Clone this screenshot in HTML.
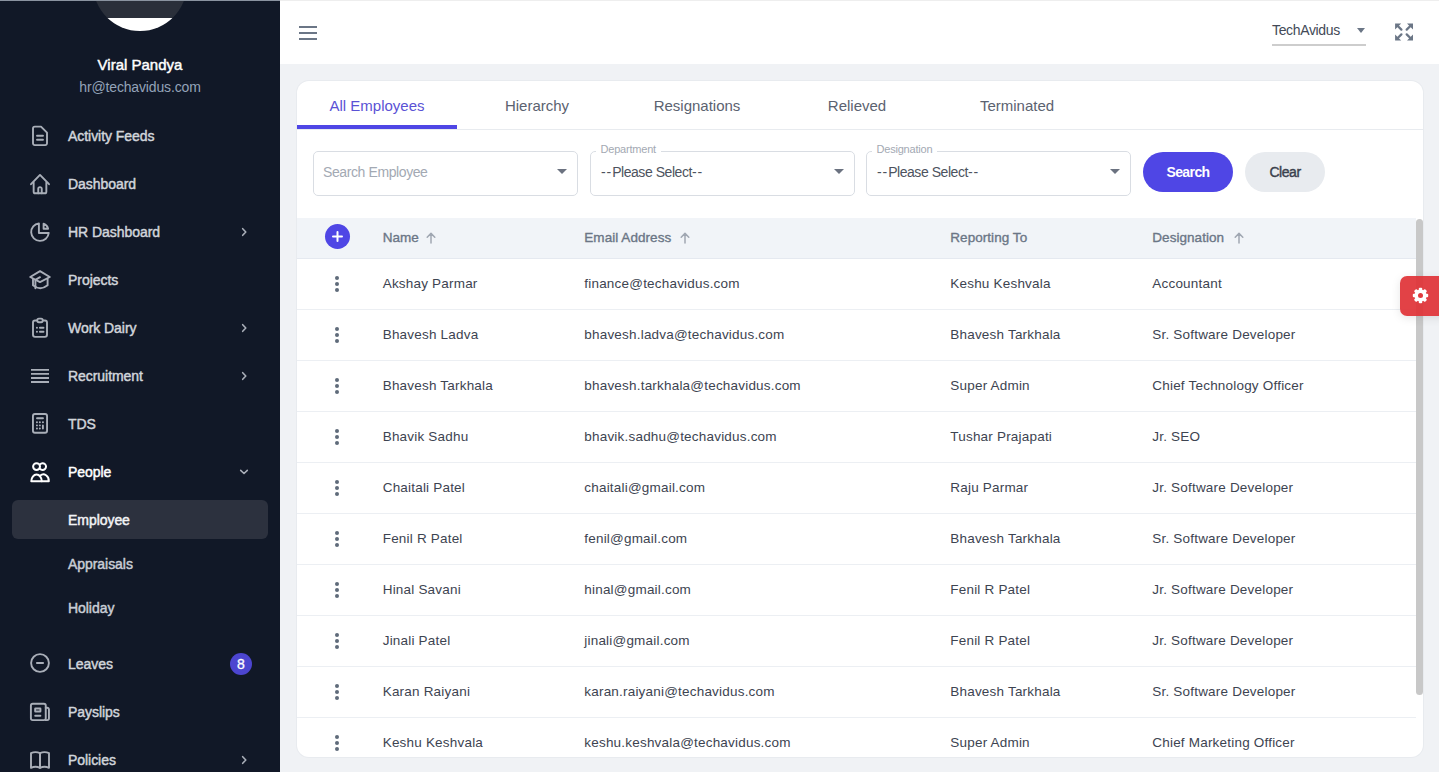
<!DOCTYPE html>
<html><head><meta charset="utf-8">
<style>
*{box-sizing:border-box;margin:0;padding:0}
html,body{width:1439px;height:772px;overflow:hidden;background:#f0f2f5;font-family:"Liberation Sans",sans-serif}
.abs{position:absolute}
#sb{position:absolute;left:0;top:0;width:280px;height:772px;background:#111827;overflow:hidden}
#topline{position:absolute;left:0;top:0;width:1439px;height:1px;background:#eeeeee;z-index:5}
#topline2{position:absolute;left:0;top:0;width:280px;height:1px;background:#8a93a0;z-index:6}
.av{position:absolute;left:93px;top:-63px;width:94px;height:94px;border-radius:50%;overflow:hidden;background:#2a2f3a}
.av .dk{position:absolute;left:0;top:80.5px;width:100%;height:20px;background:#fff}
.uname{position:absolute;left:0;width:280px;top:56px;text-align:center;color:#fff;font-size:15px;font-weight:normal;line-height:18px;letter-spacing:0px;-webkit-text-stroke:0.45px currentColor}
.umail{position:absolute;left:0;width:280px;top:78px;text-align:center;color:#94a3b8;font-size:14px;line-height:18px;letter-spacing:-0.15px}
.it{position:absolute;left:68px;color:#d1d5db;font-size:14px;font-weight:normal;line-height:18px;white-space:nowrap;letter-spacing:-0.05px;-webkit-text-stroke:0.45px currentColor}
.ic{position:absolute;left:28px;width:24px;height:24px}
.chev{position:absolute;left:239px;width:10px;height:10px}
.sel{position:absolute;left:12px;top:500px;width:256px;height:39px;background:#2c313e;border-radius:6px}
.badge{position:absolute;left:230px;top:652.5px;width:22px;height:22px;border-radius:50%;background:#4c45d0;color:#fff;font-size:14px;font-weight:normal;-webkit-text-stroke:0.3px #fff;text-align:center;line-height:22px}

#hd{position:absolute;left:280px;top:1px;width:1159px;height:63px;background:#fff}
.ham{position:absolute;left:299px;width:18px;height:2px;background:#6b7686}

#card{position:absolute;left:297px;top:81px;width:1126px;height:675.5px;background:#fff;border-radius:12px;box-shadow:0 0 0 1px #e8ebef;overflow:hidden}
.tab{position:absolute;top:0;width:160px;height:48px;text-align:center;font-size:15px;line-height:50px;color:#5b6270}
.tab.on{color:#5a52d5}
.tabul{position:absolute;left:0;top:44px;width:160px;height:4px;background:#4f46e5}
.tabbd{position:absolute;left:0;top:48px;width:1126px;height:1px;background:#e8ebef}

.inp{position:absolute;top:69.5px;width:264.5px;height:45px;border:1px solid #d9dde3;border-radius:5px}
.inp .tx{position:absolute;left:10px;top:11.5px;font-size:14px;line-height:18px;color:#4d535e;white-space:nowrap;letter-spacing:-0.45px}
.inp .dd{letter-spacing:0.9px}
.inp .tx.ph{left:9px;top:11.5px;letter-spacing:-0.4px}
.inp .ph{color:#a3a9b3}
.inp .tri{position:absolute;right:10px;top:17.5px;width:0;height:0;border-left:5px solid transparent;border-right:5px solid transparent;border-top:5px solid #6b7280}
.inp .lbl{position:absolute;left:4.5px;top:-9.5px;padding:0 5px;background:#fff;font-size:11px;line-height:14px;color:#a3a9b3;letter-spacing:-0.2px}
.btn{position:absolute;top:71px;height:40px;border-radius:20px;text-align:center;line-height:40px;font-size:14px;font-weight:bold;letter-spacing:-0.6px}

.thd{position:absolute;left:0;top:137px;width:1119px;height:41px;background:#f1f4f8;border-bottom:1px solid #e5e9f0}
.th{position:absolute;top:11px;font-size:13.5px;line-height:18px;color:#6b7686;font-weight:normal;white-space:nowrap;letter-spacing:0.05px;-webkit-text-stroke:0.35px currentColor}
.row{position:absolute;left:0;width:1119px;height:51px;border-bottom:1px solid #eceff3}
.td{position:absolute;top:16px;font-size:13.5px;line-height:18px;color:#3d4451;white-space:nowrap;letter-spacing:0.2px}
.keb{position:absolute;left:38px;top:17px;width:4px;height:16px}
.keb i{position:absolute;left:0;width:4px;height:4px;border-radius:50%;background:#5f6b7a}
.plus{position:absolute;left:28px;top:6px;width:25px;height:25px;border-radius:50%;background:#4f46e5}
.plus svg{display:block}
.arr{position:absolute;top:151px}
.sth{position:absolute;left:1119px;top:137.5px;width:7px;height:476px;background:#c8c8c8;border-radius:4px 4px 4px 4px}

#gear{position:absolute;left:1400px;top:275.5px;width:45px;height:40px;background:rgba(224,52,56,0.93);border-radius:7px 0 0 7px;box-shadow:0 2px 10px rgba(0,0,0,.10)}
.tav{position:absolute;left:1272px;top:21px;font-size:14px;line-height:18px;color:#434a57;letter-spacing:-0.35px}
.tavtri{position:absolute;left:1356.5px;top:27.5px;width:0;height:0;border-left:4.5px solid transparent;border-right:4.5px solid transparent;border-top:5px solid #6b7686}
.tavul{position:absolute;left:1272px;top:43.5px;width:94px;height:2px;background:#cdcdcd}
.fs{position:absolute;left:1394px;top:22px}
</style></head>
<body>
<div id="topline"></div>
<aside id="sb">
  <div class="av"><div class="dk"></div></div>
  <div class="uname">Viral Pandya</div>
  <div class="umail">hr@techavidus.com</div>
<svg class="ic" style="top:123.7px;color:#a9aeb8" width="24" height="24" viewBox="0 0 24 24" fill="none" stroke="currentColor" stroke-width="1.9" stroke-linecap="round" stroke-linejoin="round"><path d="M5 4.45a1.8 1.8 0 0 1 1.8-1.8h6.2l6 6v10.65a1.8 1.8 0 0 1-1.8 1.8H6.8A1.8 1.8 0 0 1 5 19.3z"/><path d="M9 11.7h6M9 15.7h6"/></svg>
<div class="it" style="top:126.9px">Activity Feeds</div>
<svg class="ic" style="top:171.5px;color:#a9aeb8" width="24" height="24" viewBox="0 0 24 24" fill="none" stroke="currentColor" stroke-width="1.9" stroke-linecap="round" stroke-linejoin="round"><path d="M3 12.2L12 2.9l9 9.3"/><path d="M5.65 10.4v9.3a1.6 1.6 0 0 0 1.6 1.6h9.5a1.6 1.6 0 0 0 1.6-1.6v-9.3"/><path d="M10.25 21.3v-4.45a1.75 1.75 0 0 1 3.5 0v4.45"/></svg>
<div class="it" style="top:174.9px">Dashboard</div>
<svg class="ic" style="top:219.5px;color:#a9aeb8" width="24" height="24" viewBox="0 0 24 24" fill="none" stroke="currentColor" stroke-width="1.9" stroke-linecap="round" stroke-linejoin="round"><path d="M10.9 3.37A8.8 8.8 0 1 0 20.75 13H10.9z"/><path d="M15.6 3.6A7 7 0 0 1 20.1 8.7H15.6z"/></svg>
<div class="it" style="top:222.9px">HR Dashboard</div>
<svg class="chev" style="top:226.5px" width="10" height="10" viewBox="0 0 10 10" fill="none" stroke="#a9aeb8" stroke-width="1.6" stroke-linecap="round" stroke-linejoin="round"><path d="M3.7 1.7L6.8 5 3.7 8.3"/></svg>
<svg class="ic" style="top:267.5px;color:#a9aeb8" width="24" height="24" viewBox="0 0 24 24" fill="none" stroke="currentColor" stroke-width="1.9" stroke-linecap="round" stroke-linejoin="round"><path d="M12 3.1L21.8 9 12 14.1 2.2 9z"/><path d="M5 11.3v5.9q7.2 6 14.6 0v-6.2"/><path d="M12 9.2L7.4 11.8v8.4"/></svg>
<div class="it" style="top:270.9px">Projects</div>
<svg class="ic" style="top:315.8px;color:#a9aeb8" width="24" height="24" viewBox="0 0 24 24" fill="none" stroke="currentColor" stroke-width="1.9" stroke-linecap="round" stroke-linejoin="round"><path d="M9.2 4.45H7a2 2 0 0 0-2 2v12.4a2 2 0 0 0 2 2h10a2 2 0 0 0 2-2V6.45a2 2 0 0 0-2-2h-2.2"/><rect x="9.25" y="2.6" width="5.5" height="3.6" rx="1.6"/><path d="M8.9 11.8h.1M8.9 15.8h.1M11.9 11.8h3.6M11.9 15.8h3.6"/></svg>
<div class="it" style="top:318.9px">Work Dairy</div>
<svg class="chev" style="top:322.8px" width="10" height="10" viewBox="0 0 10 10" fill="none" stroke="#a9aeb8" stroke-width="1.6" stroke-linecap="round" stroke-linejoin="round"><path d="M3.7 1.7L6.8 5 3.7 8.3"/></svg>
<svg class="ic" style="top:363.5px;color:#a9aeb8" width="24" height="24" viewBox="0 0 24 24" fill="none" stroke="currentColor" stroke-width="1.9" stroke-linecap="round" stroke-linejoin="round"><path stroke-linecap="butt" d="M3 5.9h18M3 9.9h18M3 14h18M3 18h18"/></svg>
<div class="it" style="top:366.9px">Recruitment</div>
<svg class="chev" style="top:370.5px" width="10" height="10" viewBox="0 0 10 10" fill="none" stroke="#a9aeb8" stroke-width="1.6" stroke-linecap="round" stroke-linejoin="round"><path d="M3.7 1.7L6.8 5 3.7 8.3"/></svg>
<svg class="ic" style="top:411.3px;color:#a9aeb8" width="24" height="24" viewBox="0 0 24 24" fill="none" stroke="currentColor" stroke-width="1.9" stroke-linecap="round" stroke-linejoin="round"><rect x="4.95" y="3.05" width="14.1" height="18.7" rx="2"/><path d="M9 7.2h6"/><path d="M8.9 11.3h.1M11.8 11.3h.1M14.9 11.3h.1M8.9 14.4h.1M11.8 14.4h.1M14.9 14.4v3.1M8.9 17.5h.1M11.8 17.5h.1"/></svg>
<div class="it" style="top:414.9px">TDS</div>
<svg class="ic" style="top:459.5px;color:#ffffff" width="24" height="24" viewBox="0 0 24 24" fill="none" stroke="currentColor" stroke-width="2.0" stroke-linecap="round" stroke-linejoin="round"><circle cx="8.55" cy="6.6" r="3.45"/><path d="M12 4.3A3.45 3.45 0 1 1 12 8.9"/><path d="M3.3 21.2A5.25 6.6 0 0 1 13.8 21.2z"/><path d="M12.3 15.6A5.4 6.4 0 0 1 20.8 21.2H13.8"/></svg>
<div class="it" style="top:462.9px;color:#fff">People</div>
<svg class="chev" style="top:466.5px" width="10" height="10" viewBox="0 0 10 10" fill="none" stroke="#a9aeb8" stroke-width="1.6" stroke-linecap="round" stroke-linejoin="round"><path d="M1.7 3.4L5 6.5 8.3 3.4"/></svg>
<svg class="ic" style="top:651.1px;color:#a9aeb8" width="24" height="24" viewBox="0 0 24 24" fill="none" stroke="currentColor" stroke-width="1.9" stroke-linecap="round" stroke-linejoin="round"><circle cx="12" cy="12" r="8.9"/><path d="M8.9 12h6.2"/></svg>
<div class="it" style="top:655.0px">Leaves</div>
<svg class="ic" style="top:699.5px;color:#a9aeb8" width="24" height="24" viewBox="0 0 24 24" fill="none" stroke="currentColor" stroke-width="1.9" stroke-linecap="round" stroke-linejoin="round"><rect x="2.9" y="3.75" width="14.85" height="16.4" rx="1.8"/><path d="M17.75 7.7h1.4a1.8 1.8 0 0 1 1.8 1.8v8.85a1.8 1.8 0 0 1-1.8 1.8h-1.4"/><rect x="7.15" y="8.5" width="5.3" height="3" rx=".3"/><path d="M7.2 15.8h5.2"/></svg>
<div class="it" style="top:703.3px">Payslips</div>
<svg class="ic" style="top:747.8px;color:#a9aeb8" width="24" height="24" viewBox="0 0 24 24" fill="none" stroke="currentColor" stroke-width="1.9" stroke-linecap="round" stroke-linejoin="round"><path d="M3 5.2c3-1.4 6-1.4 9 0v14.6c-3-1.4-6-1.4-9 0z"/><path d="M12 5.2c3-1.4 6-1.4 9 0v14.6c-3-1.4-6-1.4-9 0z"/></svg>
<div class="it" style="top:751.0px">Policies</div>
<svg class="chev" style="top:754.8px" width="10" height="10" viewBox="0 0 10 10" fill="none" stroke="#a9aeb8" stroke-width="1.6" stroke-linecap="round" stroke-linejoin="round"><path d="M3.7 1.7L6.8 5 3.7 8.3"/></svg>
<div class="sel"></div>
<div class="it" style="top:510.6px;color:#f3f4f6">Employee</div>
<div class="it" style="top:554.6px;color:#c9ced6">Appraisals</div>
<div class="it" style="top:598.6px;color:#c9ced6">Holiday</div>
<div class="badge">8</div>
</aside>
<div id="topline2"></div>
<header id="hd"></header>
<div class="ham" style="top:25.5px"></div>
<div class="ham" style="top:31.5px"></div>
<div class="ham" style="top:37.5px"></div>

<div id="card">
  <div class="tab on" style="left:0">All Employees</div>
  <div class="tab" style="left:160px">Hierarchy</div>
  <div class="tab" style="left:320px">Resignations</div>
  <div class="tab" style="left:480px">Relieved</div>
  <div class="tab" style="left:640px">Terminated</div>
  <div class="tabul"></div>
  <div class="tabbd"></div>

  <div class="inp" style="left:16px"><div class="tx ph">Search Employee</div><div class="tri"></div></div>
  <div class="inp" style="left:293px"><div class="lbl">Department</div><div class="tx"><span class="dd">--</span>Please Select<span class="dd">--</span></div><div class="tri"></div></div>
  <div class="inp" style="left:569px"><div class="lbl">Designation</div><div class="tx"><span class="dd">--</span>Please Select<span class="dd">--</span></div><div class="tri"></div></div>
  <div class="btn" style="left:846px;width:90px;background:#4f46e5;color:#fff">Search</div>
  <div class="btn" style="left:948px;width:80px;background:#e8ebef;color:#3a414d;font-weight:normal;letter-spacing:-0.45px;-webkit-text-stroke:0.4px currentColor">Clear</div>

  <div class="thd">
<div class="plus"><svg width="25" height="25" viewBox="0 0 25 25" stroke="#fff" stroke-width="2" stroke-linecap="round"><path d="M12.5 8v9M8 12.5h9"/></svg></div>
<div class="th" style="left:85.7px">Name</div>
<div class="th" style="left:287.3px">Email Address</div>
<div class="th" style="left:653.3px">Reporting To</div>
<div class="th" style="left:855.3px">Designation</div>
</div>
<svg class="arr" style="left:127.8px" width="12" height="12" viewBox="0 0 12 12" fill="none" stroke="#a0a7b2" stroke-width="1.5" stroke-linecap="round" stroke-linejoin="round"><path d="M6 11V1.4M2.2 5.2L6 1.4l3.8 3.8"/></svg>
<svg class="arr" style="left:382.0px" width="12" height="12" viewBox="0 0 12 12" fill="none" stroke="#a0a7b2" stroke-width="1.5" stroke-linecap="round" stroke-linejoin="round"><path d="M6 11V1.4M2.2 5.2L6 1.4l3.8 3.8"/></svg>
<svg class="arr" style="left:936.0px" width="12" height="12" viewBox="0 0 12 12" fill="none" stroke="#a0a7b2" stroke-width="1.5" stroke-linecap="round" stroke-linejoin="round"><path d="M6 11V1.4M2.2 5.2L6 1.4l3.8 3.8"/></svg>
<div class="row" style="top:178.3px"><div class="keb"><i style="top:0"></i><i style="top:6px"></i><i style="top:12px"></i></div>
<div class="td" style="left:85.7px">Akshay Parmar</div>
<div class="td" style="left:287.3px">finance@techavidus.com</div>
<div class="td" style="left:653.3px">Keshu Keshvala</div>
<div class="td" style="left:855.3px">Accountant</div>
</div>
<div class="row" style="top:229.3px"><div class="keb"><i style="top:0"></i><i style="top:6px"></i><i style="top:12px"></i></div>
<div class="td" style="left:85.7px">Bhavesh Ladva</div>
<div class="td" style="left:287.3px">bhavesh.ladva@techavidus.com</div>
<div class="td" style="left:653.3px">Bhavesh Tarkhala</div>
<div class="td" style="left:855.3px">Sr. Software Developer</div>
</div>
<div class="row" style="top:280.3px"><div class="keb"><i style="top:0"></i><i style="top:6px"></i><i style="top:12px"></i></div>
<div class="td" style="left:85.7px">Bhavesh Tarkhala</div>
<div class="td" style="left:287.3px">bhavesh.tarkhala@techavidus.com</div>
<div class="td" style="left:653.3px">Super Admin</div>
<div class="td" style="left:855.3px">Chief Technology Officer</div>
</div>
<div class="row" style="top:331.3px"><div class="keb"><i style="top:0"></i><i style="top:6px"></i><i style="top:12px"></i></div>
<div class="td" style="left:85.7px">Bhavik Sadhu</div>
<div class="td" style="left:287.3px">bhavik.sadhu@techavidus.com</div>
<div class="td" style="left:653.3px">Tushar Prajapati</div>
<div class="td" style="left:855.3px">Jr. SEO</div>
</div>
<div class="row" style="top:382.3px"><div class="keb"><i style="top:0"></i><i style="top:6px"></i><i style="top:12px"></i></div>
<div class="td" style="left:85.7px">Chaitali Patel</div>
<div class="td" style="left:287.3px">chaitali@gmail.com</div>
<div class="td" style="left:653.3px">Raju Parmar</div>
<div class="td" style="left:855.3px">Jr. Software Developer</div>
</div>
<div class="row" style="top:433.3px"><div class="keb"><i style="top:0"></i><i style="top:6px"></i><i style="top:12px"></i></div>
<div class="td" style="left:85.7px">Fenil R Patel</div>
<div class="td" style="left:287.3px">fenil@gmail.com</div>
<div class="td" style="left:653.3px">Bhavesh Tarkhala</div>
<div class="td" style="left:855.3px">Sr. Software Developer</div>
</div>
<div class="row" style="top:484.3px"><div class="keb"><i style="top:0"></i><i style="top:6px"></i><i style="top:12px"></i></div>
<div class="td" style="left:85.7px">Hinal Savani</div>
<div class="td" style="left:287.3px">hinal@gmail.com</div>
<div class="td" style="left:653.3px">Fenil R Patel</div>
<div class="td" style="left:855.3px">Jr. Software Developer</div>
</div>
<div class="row" style="top:535.3px"><div class="keb"><i style="top:0"></i><i style="top:6px"></i><i style="top:12px"></i></div>
<div class="td" style="left:85.7px">Jinali Patel</div>
<div class="td" style="left:287.3px">jinali@gmail.com</div>
<div class="td" style="left:653.3px">Fenil R Patel</div>
<div class="td" style="left:855.3px">Jr. Software Developer</div>
</div>
<div class="row" style="top:586.3px"><div class="keb"><i style="top:0"></i><i style="top:6px"></i><i style="top:12px"></i></div>
<div class="td" style="left:85.7px">Karan Raiyani</div>
<div class="td" style="left:287.3px">karan.raiyani@techavidus.com</div>
<div class="td" style="left:653.3px">Bhavesh Tarkhala</div>
<div class="td" style="left:855.3px">Sr. Software Developer</div>
</div>
<div class="row" style="top:637.3px"><div class="keb"><i style="top:0"></i><i style="top:6px"></i><i style="top:12px"></i></div>
<div class="td" style="left:85.7px">Keshu Keshvala</div>
<div class="td" style="left:287.3px">keshu.keshvala@techavidus.com</div>
<div class="td" style="left:653.3px">Super Admin</div>
<div class="td" style="left:855.3px">Chief Marketing Officer</div>
</div>
<div class="sth"></div>
</div>
<div id="gear"><svg style="position:absolute;left:11.5px;top:11.5px" width="17" height="17" viewBox="0 0 17 17"><g fill="#fff"><circle cx="8.5" cy="8.5" r="6.1"/><rect x="6.75" y="0.8" width="3.5" height="15.4" rx="1"/><rect x="6.75" y="0.8" width="3.5" height="15.4" rx="1" transform="rotate(45 8.5 8.5)"/><rect x="6.75" y="0.8" width="3.5" height="15.4" rx="1" transform="rotate(90 8.5 8.5)"/><rect x="6.75" y="0.8" width="3.5" height="15.4" rx="1" transform="rotate(135 8.5 8.5)"/></g><circle cx="8.5" cy="8.5" r="2.5" fill="#e03a3e"/></svg></div>
<div class="tav">TechAvidus</div><div class="tavtri"></div><div class="tavul"></div>
<svg class="fs" width="20" height="20" viewBox="0 0 20 20"><g fill="#6b7686"><path d="M1.1 1.4H7.2L1.1 7.4z M13 1.4H19V7.4z M1.1 12.4V18.6H7.2z M19 12.4V18.6H13z"/></g><g stroke="#6b7686" stroke-width="2.3" stroke-linecap="round"><path d="M3.5 3.8L7.4 7.6M16.6 3.8L12.7 7.6M3.5 16.2L7.4 12.4M16.6 16.2L12.7 12.4"/></g></svg>
</body></html>
